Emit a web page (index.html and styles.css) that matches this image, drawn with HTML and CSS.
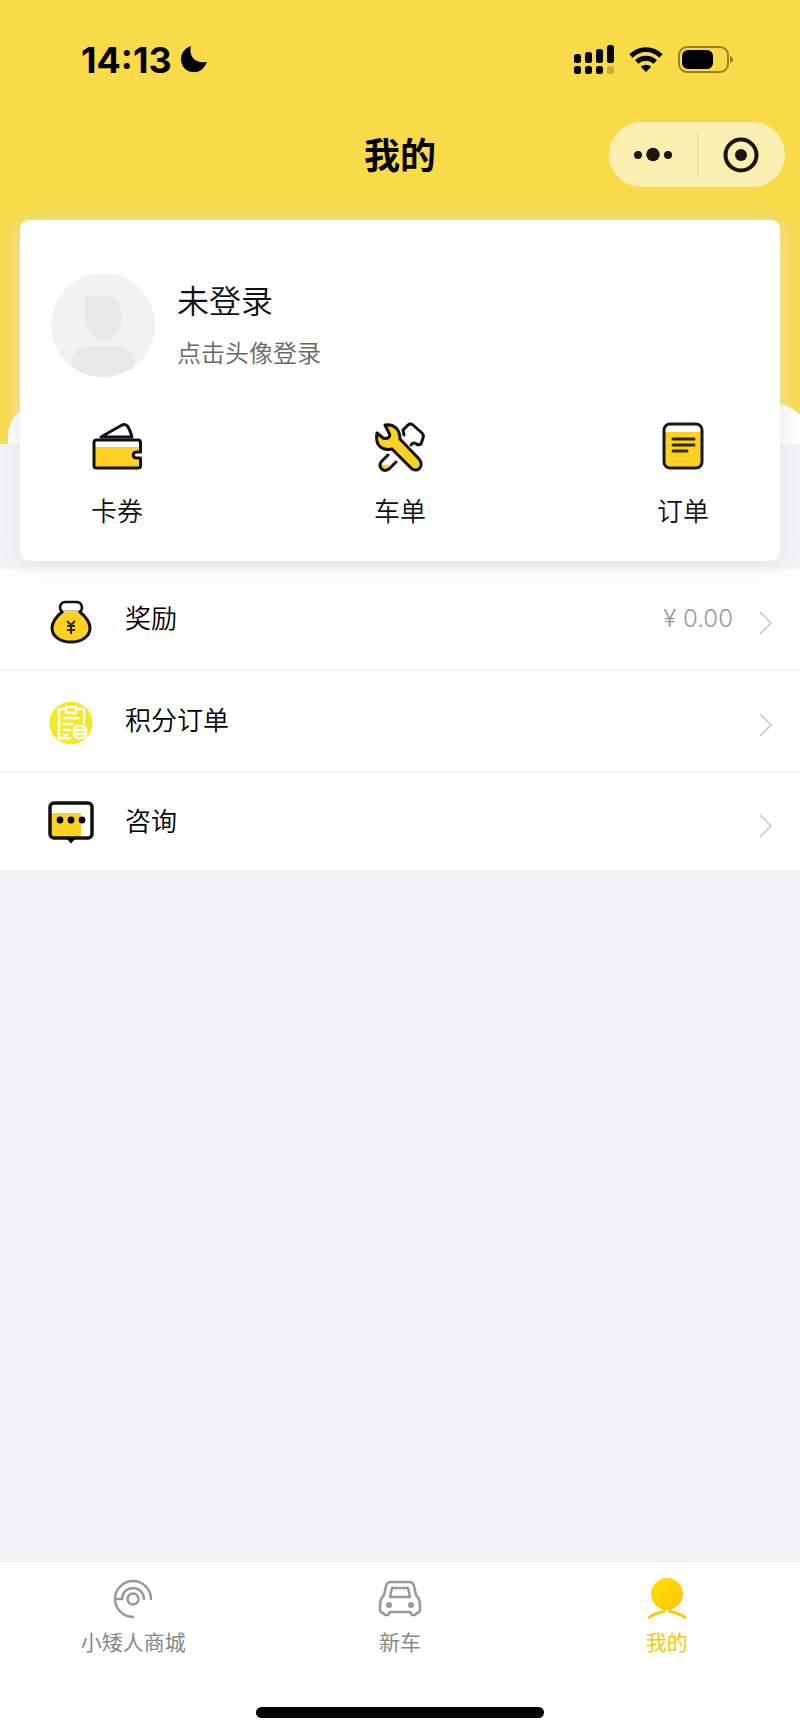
FILE: index.html
```html
<!DOCTYPE html>
<html lang="zh-CN">
<head>
<meta charset="utf-8">
<meta name="viewport" content="width=device-width, initial-scale=1">
<title>我的</title>
<link rel="stylesheet" href="styles.css">
</head>
<body>
<div class="top">
  <div class="status">
    <div class="clock">
      <span>14:13</span>
      <svg width="28" height="28" viewBox="0 0 28 28" aria-hidden="true"><path d="M11 0C9 7 12 18 27 16C24 23 19 27 13 26C6 26 1 20 1 13C1 7 5 2 11 0Z"/></svg>
    </div>
    <div class="signals">
      <svg width="40" height="30" viewBox="0 0 40 30" aria-hidden="true">
        <rect x="0" y="9" width="7" height="9" rx="2.500"/><rect x="11" y="7" width="7" height="11" rx="2.500"/><rect x="22" y="4" width="7" height="14" rx="2.500"/><rect x="33" y="0" width="7" height="18" rx="2.500"/>
        <rect x="0" y="21" width="7" height="8" rx="2.500"/><rect x="11" y="21" width="7" height="8" rx="2.500"/><rect x="22" y="21" width="7" height="8" rx="2.500"/><rect x="33" y="21" width="7" height="8" rx="2.500" opacity=".2"/>
      </svg>
      <svg width="34" height="26" viewBox="0 0 34 26" aria-hidden="true">
        <path d="M2 9C10.500 .5 23.500 .5 32 9M7.800 15C13 10 21 10 26.200 15" fill="none" stroke="#000" stroke-width="4.800"/>
        <path d="M17 25L11.800 19.800C14.800 17 19.200 17 22.200 19.800Z"/>
      </svg>
      <svg width="56" height="28" viewBox="0 0 56 28" aria-hidden="true">
        <rect x="1" y="1" width="49" height="25" rx="8" fill="none" stroke="#97801f" stroke-width="2"/>
        <rect x="4" y="4" width="31" height="19" rx="6"/><path d="M52 10C56 11 56 16 52 17Z" fill="#97801f"/>
      </svg>
    </div>
  </div>
  <header class="nav">
    <h1>我的</h1>
    <div class="capsule">
      <button type="button" aria-label="更多">
        <svg width="38" height="16" viewBox="0 0 38 16"><circle cx="4" cy="8" r="4"/><circle cx="19" cy="7.500" r="6.700"/><circle cx="34" cy="8" r="4"/></svg>
      </button>
      <button type="button" aria-label="关闭">
        <svg width="36" height="36" viewBox="0 0 36 36"><circle cx="18" cy="18" r="15.500" fill="none" stroke="#1a160c" stroke-width="4"/><circle cx="18" cy="18" r="6"/></svg>
      </button>
    </div>
  </header>
  <main class="card">
    <div class="user">
      <button type="button" class="avatar" aria-label="登录">
        <svg width="104" height="104" viewBox="0 0 104 104">
          <defs><clipPath id="disc"><circle cx="52" cy="52" r="52"/></clipPath></defs>
          <circle cx="52" cy="52" r="52" fill="#f2f2f2"/>
          <path d="M34 23H52C64 23 71 32 71 44C71 58 63 67 53 67C42 67 34 57 34 44Z" fill="#e8e8e8"/>
          <rect x="20" y="74" width="64" height="44" rx="16" fill="#e8e8e8" clip-path="url(#disc)"/>
        </svg>
      </button>
      <div>
        <h2>未登录</h2>
        <p>点击头像登录</p>
      </div>
    </div>
    <nav class="actions">
      <a href="#coupons">
        <svg width="52" height="52" viewBox="0 0 52 52" aria-hidden="true">
          <path d="M10 16L31 4C36 2 38 6 41 16Z" fill="#fff" stroke="#111" stroke-width="3" stroke-linejoin="round"/>
          <rect x="4" y="19" width="46" height="28" rx="3" fill="#fff"/><path d="M4 26H50V47H4Z" fill="#fdd122"/>
          <path d="M44 31H53V36H44Z" fill="#fff"/>
          <path d="M49.500 31H46C41 31 41 37 46 37H49.500V45Q49.500 47 47 47H5.500Q3 47 3 45V21.500Q3 19 5.500 19H47Q49.500 19 49.500 21.500Z" fill="none" stroke="#111" stroke-width="3" stroke-linejoin="round"/>
        </svg>
        <span>卡券</span>
      </a>
      <a href="#vehicle">
        <svg width="52" height="52" viewBox="0 0 52 52" fill="none" stroke="#111" stroke-width="3" stroke-linecap="round" stroke-linejoin="round" aria-hidden="true">
          <path d="M30 14L29 9L34 4Q36 2 39 4L48 12Q50 14 49 17L47 23L44 24Q39 20 37 24"/>
          <path d="M7 42C9 45 13 44 14 43L16 47L12 50C8 50 5 46 7 42Z" fill="#fdd122" stroke="none"/>
          <path d="M14 34L7 41C4 46 9 52 15 48L22 41"/>
          <path d="M11 4C20 3 26 8 26 18L45 38C51 45 43 53 37 47L18 28C7 30 1 24 3 12L9 17C14 19 17 15 15 12Z" fill="#fdd122"/>
        </svg>
        <span>车单</span>
      </a>
      <a href="#orders">
        <svg width="52" height="52" viewBox="0 0 52 52" aria-hidden="true">
          <rect x="7" y="3" width="38" height="44" rx="6" fill="#fff"/><path d="M8 11H44V41Q44 46 39 46H13Q8 46 8 41Z" fill="#fdd122"/>
          <rect x="7" y="3" width="38" height="44" rx="6" fill="none" stroke="#171717" stroke-width="3"/>
          <path d="M16 18H37M16 24H37M16 30H30" stroke="#332900" stroke-width="3" stroke-linecap="round"/>
        </svg>
        <span>订单</span>
      </a>
    </nav>
  </main>
</div>
<ul class="list">
  <li><a href="#rewards">
    <svg class="icon" width="46" height="46" viewBox="0 0 46 46" aria-hidden="true">
      <path d="M14 13C11 10 11 3 18 3H28C35 3 35 10 32 13Z" fill="#fff" stroke="#111" stroke-width="2.500"/>
      <path d="M15 12H31C37 17 42 23 42 29C42 38 33 43 23 43S4 38 4 29C4 23 9 17 15 12Z" fill="#fdd122"/>
      <path d="M15 12C9 17 4 23 4 29C4 38 13 43 23 43S42 38 42 29C42 23 37 17 31 12" fill="none" stroke="#111" stroke-width="3"/>
      <path d="M19 22L23 26L27 22M19 27H27M19 31H27M23 26V35" fill="none" stroke="#332900" stroke-width="2"/>
    </svg>
    <span class="label">奖励</span><span class="amount">¥ 0.00</span>
    <svg class="chevron" width="14" height="24" viewBox="0 0 14 24" aria-hidden="true"><path d="M2 1L13 12L2 23"/></svg>
  </a></li>
  <li><a href="#points">
    <svg class="icon" width="46" height="46" viewBox="0 0 46 46" fill="none" stroke="#fff" stroke-width="2.500" stroke-linecap="round" stroke-linejoin="round" aria-hidden="true">
      <circle cx="23" cy="22" r="21.500" fill="#f5ea22" stroke="none"/>
      <path d="M18 8H11V37H22M28 8H36V22M18 6H28V12H18ZM16 17H30M16 23H25M16 29H22M16 34H19"/>
      <rect x="26" y="25" width="12" height="12" rx="4" fill="#f5ea22"/><path d="M28 29H36M28 33H36"/>
    </svg>
    <span class="label">积分订单</span>
    <svg class="chevron" width="14" height="24" viewBox="0 0 14 24" aria-hidden="true"><path d="M2 1L13 12L2 23"/></svg>
  </a></li>
  <li><a href="#consult">
    <svg class="icon" width="46" height="46" viewBox="0 0 46 46" aria-hidden="true">
      <rect x="2" y="2" width="42" height="35" rx="4" fill="#fff"/><path d="M3 12H33V36H3Z" fill="#fdd122"/>
      <rect x="2" y="2" width="42" height="35" rx="4" fill="none" stroke="#111" stroke-width="3.500"/>
      <path d="M18 37H28L23 42.500Z"/><circle cx="12" cy="19" r="3.400"/><circle cx="23" cy="19" r="3.400"/><circle cx="34" cy="19" r="3.400"/>
    </svg>
    <span class="label">咨询</span>
    <svg class="chevron" width="14" height="24" viewBox="0 0 14 24" aria-hidden="true"><path d="M2 1L13 12L2 23"/></svg>
  </a></li>
</ul>
<footer class="bottom">
  <nav class="tabs">
    <a href="#mall">
      <svg width="44" height="44" viewBox="0 0 44 44" fill="none" stroke="#999" stroke-width="2.500" stroke-linecap="round" aria-hidden="true">
        <circle cx="22" cy="22" r="5.500"/><path d="M40 22A18 18 0 1 0 22 40M33 22A11 11 0 0 0 11 22H5"/>
      </svg>
      <span>小矮人商城</span>
    </a>
    <a href="#newcar">
      <svg width="44" height="44" viewBox="0 0 44 44" fill="none" stroke="#999" stroke-width="2.500" stroke-linejoin="round" aria-hidden="true">
        <path d="M13 5H31Q35 5 36 9L38 18Q42 22 42 28V33Q42 35 39 36L37 38H34L32 35H12L10 38H7L5 36Q2 35 2 33V28Q2 22 6 18L8 9Q9 5 13 5Z"/>
        <path d="M14 11H30L32 20H12Z"/><circle cx="11" cy="28" r="3" fill="#999" stroke="none"/><circle cx="33" cy="28" r="3" fill="#999" stroke="none"/>
      </svg>
      <span>新车</span>
    </a>
    <a href="#me" class="active" aria-current="page">
      <svg width="44" height="44" viewBox="0 0 44 44" aria-hidden="true">
        <defs><linearGradient id="sun" x1="0" y1="0" x2="1" y2="1"><stop offset="0" stop-color="#ffe000"/><stop offset="1" stop-color="#ffc40a"/></linearGradient></defs>
        <circle cx="22" cy="17" r="16" fill="url(#sun)"/>
        <path d="M4 40.500Q10 36 19 34.500V31M40 40.500Q34 36 25 34.500V31" fill="none" stroke="#fdcb0c" stroke-width="3" stroke-linecap="round"/>
      </svg>
      <span>我的</span>
    </a>
  </nav>
  <div class="home"></div>
</footer>
</body>
</html>
```
FILE: styles.css
```css
* { box-sizing: border-box; }
html { overflow-x: hidden; }
body {
  margin: 0;
  min-height: 100vh;
  display: flex;
  flex-direction: column;
  background: #f3f4f6;
  color: #111;
  font-family: Inter, "Noto Sans CJK SC", sans-serif;
  font-weight: 350;
}
h1, h2, p, ul { margin: 0; padding: 0; }
a { color: inherit; text-decoration: none; }
button { border: 0; padding: 0; background: none; cursor: pointer; }
svg { display: block; flex: none; }

.top {
  position: relative;
  z-index: 1;
  padding: 0 20px 8px;
  background: linear-gradient(#f9db49 444px, #f3f4f6 444px);
}
.top::before {
  content: "";
  position: absolute;
  top: 404px;
  left: 8px;
  right: -8px;
  height: 40px;
  border-radius: 32px 32px 0 0;
  background: #fff;
}

.status {
  display: flex;
  justify-content: space-between;
  align-items: center;
  height: 119px;
  padding: 0 46px 0 61px;
}
.clock { display: flex; align-items: center; gap: 8px; font-size: 36px; font-weight: 700; color: #000; }
.signals { display: flex; align-items: center; gap: 15px; }

.nav {
  display: grid;
  grid-template-columns: 1fr auto 1fr;
  align-items: center;
  height: 71px;
  margin: 0 -5px 30px;
}
.nav h1 { grid-column: 2; padding-top: 2px; font-size: 36px; line-height: 48px; font-weight: 700; color: #000; }
.capsule {
  justify-self: end;
  display: flex;
  align-items: center;
  width: 176px;
  height: 65px;
  border-radius: 33px;
  background: #fbefb2;
}
.capsule button { flex: 1; height: 44px; display: grid; place-items: center; fill: #1a160c; }
.capsule button + button { border-left: 1px solid #e2d69d; }

.card {
  position: relative;
  padding: 53px 30px 30px;
  border-radius: 9px;
  background: #fff;
  box-shadow: 0 4px 24px rgba(225, 225, 225, .8);
}
.user { display: flex; align-items: center; gap: 22px; padding-left: 1px; }
.user h2 { font-size: 32px; line-height: 48px; font-weight: 350; }
.user p { margin-top: 10px; font-size: 24px; line-height: 36px; color: #666; }
.actions { display: flex; justify-content: space-between; padding: 44px 41px 0; }
.actions a { display: flex; flex-direction: column; align-items: center; gap: 20px; font-size: 26px; line-height: 38px; }

.list { list-style: none; background: #fff; color: #000; }
.list li + li { border-top: 2px solid #f3f3f5; }
.list a { display: flex; align-items: center; height: 100px; padding: 0 28px 0 48px; }
.list li:last-child a { height: 97px; }
.icon { margin: 5px 31px 0 0; }
.label { flex: 1; font-size: 26px; line-height: 38px; }
.amount { margin-right: 25px; font-size: 24px; line-height: 36px; font-weight: 300; color: #999; }
.chevron { margin-top: 8px; fill: none; stroke: #c4c4c4; stroke-width: 1.500; }

.bottom { margin-top: auto; background: #fff; border-top: 1px solid #ebedef; }
.tabs { display: grid; grid-template-columns: repeat(3, 1fr); padding-top: 15px; }
.tabs a { display: flex; flex-direction: column; align-items: center; gap: 6px; font-size: 21px; line-height: 32px; font-weight: 400; color: #888; }
.tabs .active { color: #f6c800; }
.home { width: 36%; height: 11px; margin: 48px auto 16px; border-radius: 6px; background: #000; }
```
